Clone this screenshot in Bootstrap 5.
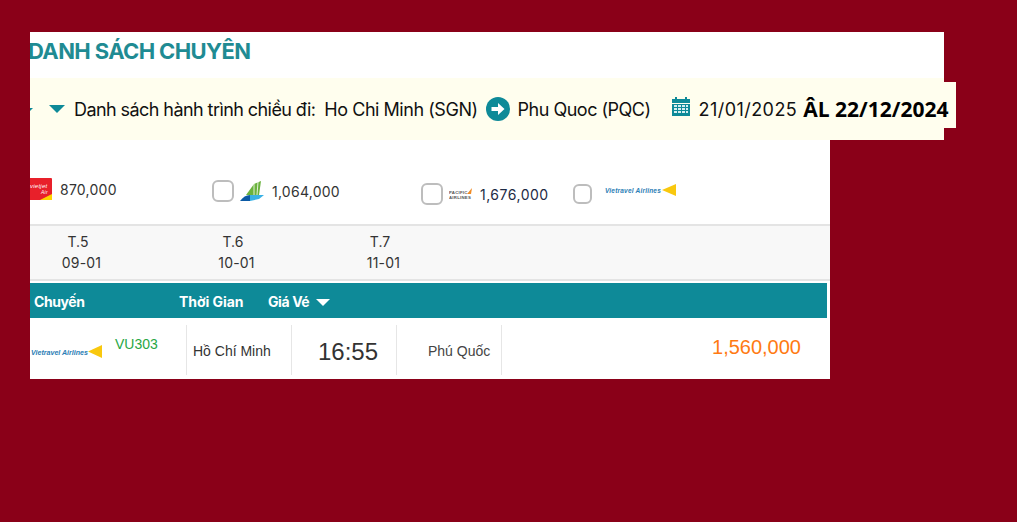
<!DOCTYPE html>
<html lang="vi">
<head>
<meta charset="utf-8">
<title>Danh sách chuyến</title>
<link rel="stylesheet" href="https://cdn.jsdelivr.net/npm/bootstrap@5.3.0/dist/css/bootstrap.min.css">
<style>
html,body{height:100%}
body{background:#8a0018;font-family:Inter,"Liberation Sans",sans-serif;overflow:hidden;color:#212529}
.shell{margin:32px 0 0 30px;width:914px}
.head-panel{background:#fff;height:46px;overflow:hidden}
.title-txt{color:#1f8b93;font-size:22px;font-weight:700;line-height:38px;margin:0 0 0 -2px;letter-spacing:-.62px;white-space:nowrap}
.route-bar{background:#fffeee;height:62px;font-size:18px;letter-spacing:-.57px;color:#111;white-space:nowrap}
.route-bar>*{flex:none}
.caret-stub{width:0;height:0;border-top:3px solid #0e8a98;border-right:3px solid transparent}
.caret-teal{width:0;height:0;border-left:8px solid transparent;border-right:8px solid transparent;border-top:8px solid #0e8a98;margin:0 9px 0 16px}
.to-place{margin-left:9px;letter-spacing:-.46px}
.end-place{letter-spacing:-.5px}
.cal-ico{margin:0 9px 6px 21px}
.date-txt{letter-spacing:.45px}
.lunar{font-family:"Open Sans","Liberation Sans",sans-serif;font-weight:700;font-size:21px;letter-spacing:0;background:#fffeee;color:#000;height:46px;padding:8px 8px 0 6px;line-height:38px;align-self:flex-start;margin-top:4px}
.list-panel{background:#fff;width:800px;height:239px;overflow:hidden}
.air-row{height:86px;border-bottom:2px solid #e4e4e4;position:relative;font-size:14px;letter-spacing:.25px;color:#333}
.air-item{position:absolute;display:flex;align-items:center}
.air-item>*{flex:none}
.price-pa{color:#1d2a44;letter-spacing:.5px}
.chk{width:22px;height:22px;border:2px solid #bdbdbd;border-radius:6px;background:#fff;display:block}
.chk-sm{width:19px;height:20px}
.vtr{margin-left:13px;margin-top:-8px}
.day-row{height:55px;background:#f8f8f8;border-bottom:2px solid #e4e4e4;position:relative;font-size:14px;color:#333;text-align:center;line-height:21px}
.day-cell{position:absolute;top:5px;width:80px}
.day-date{display:block;padding-left:7px;letter-spacing:.2px}
.grid-head{background:#0e8a98;color:#fff;width:797px;height:35px;margin-top:2px;font-size:14px;font-weight:700;letter-spacing:-.4px;line-height:37px;position:relative}
.grid-head span{position:absolute;top:0;white-space:nowrap}
.caret-white{position:absolute;left:286px;top:16px;width:0;height:0;border-left:7px solid transparent;border-right:7px solid transparent;border-top:7px solid #fff}
.flight-row{height:61px;position:relative;font-family:"Liberation Sans",sans-serif;overflow:hidden}
.cell-txt{position:absolute;white-space:nowrap}
.vline{position:absolute;width:1px;background:#e6e6e6;top:7px;bottom:4px}
</style>
</head>
<body>
<div class="shell">
  <div class="head-panel"><h4 class="title-txt">DANH SÁCH CHUYÊN</h4></div>
  <div class="route-bar d-flex align-items-center">
    <span class="caret-stub"></span>
    <span class="caret-teal"></span>
    <span>Danh sách hành trình chiều đi:</span>
    <span class="to-place">Ho Chi Minh (SGN)</span>
    <svg class="mx-2" width="24" height="24" viewBox="0 0 24 24" aria-hidden="true"><circle cx="12" cy="12" r="12" fill="#0e8a98"/><path d="M5.500 10H12V6l6.500 6-6.500 6v-4H5.500z" fill="#fff"/></svg>
    <span class="end-place">Phu Quoc (PQC)</span>
    <svg class="cal-ico" width="18" height="19" viewBox="0 0 18 19" aria-hidden="true"><path fill="#0e8a98" d="M0 2h3V0h2v2h8V0h2v2h3v17H0z"/><path fill="#fffeee" d="M0 6h18v1H0z"/><g fill="#d5eef1"><rect x="2" y="8" width="3" height="2"/><rect x="6" y="8" width="3" height="2"/><rect x="10" y="8" width="3" height="2"/><rect x="14" y="8" width="2" height="2"/><rect x="2" y="11" width="3" height="2"/><rect x="6" y="11" width="3" height="2"/><rect x="10" y="11" width="3" height="2"/><rect x="14" y="11" width="2" height="2"/><rect x="2" y="14" width="3" height="2"/><rect x="6" y="14" width="3" height="2"/><rect x="10" y="14" width="3" height="2"/><rect x="14" y="14" width="2" height="2"/></g></svg>
    <span class="date-txt">21/01/2025</span>
    <span class="lunar">ÂL 22/12/2024</span>
  </div>
  <div class="list-panel">
    <div class="air-row">
      <div class="air-item" style="left:0;top:38px">
        <svg width="22" height="23" viewBox="0 0 22 23" aria-hidden="true"><path d="M0 0h21a1 1 0 0 1 1 1v21H0z" fill="#e8202a"/><path d="M22 16v6H10z" fill="#ffd400"/><text x="0" y="10" font-size="6" font-style="italic" fill="#fff" font-family="Liberation Sans">vietjet</text><text x="11" y="16" font-size="5" font-style="italic" fill="#fff" font-family="Liberation Sans">Air</text></svg>
        <span class="ms-2">870,000</span>
      </div>
      <div class="air-item" style="left:182px;top:40px">
        <span class="chk"></span>
        <svg style="margin-left:6px" width="24" height="20" viewBox="0 0 24 20" aria-hidden="true"><path d="M6 14L14 3l7-3-2 14z" fill="#6bb33e"/><path d="M14 3v11M18 1l-1 13" stroke="#fff" stroke-width=".8"/><path d="M0 20c3-4 6-6 10-6v6z" fill="#0b5aa5"/><path d="M10 14h14l-5 4-9 2z" fill="#39b1e6"/></svg>
        <span class="ms-2">1,064,000</span>
      </div>
      <div class="air-item" style="left:391px;top:43px">
        <span class="chk"></span>
        <svg style="margin-left:6px;margin-right:7px" width="24" height="14" viewBox="0 0 24 14" aria-hidden="true"><text x="0" y="7" font-size="4.300" font-weight="700" fill="#555" font-family="Liberation Sans">PACIFIC</text><text x="0" y="12" font-size="4.300" font-weight="700" fill="#555" font-family="Liberation Sans">AIRLINES</text><path d="M18 7l5-6-1 6z" fill="#f08a24"/></svg>
        <span class="price-pa">1,676,000</span>
      </div>
      <div class="air-item" style="left:543px;top:44px">
        <span class="chk chk-sm"></span>
        <svg class="vtr" width="71" height="12" viewBox="0 0 71 12" aria-hidden="true"><text x="0" y="9" font-size="8" font-style="italic" font-weight="700" fill="#2a7db5" font-family="Liberation Sans" textLength="56" lengthAdjust="spacingAndGlyphs">Vietravel Airlines</text><path d="M57 6L71 0v12z" fill="#f9c80e"/></svg>
      </div>
    </div>
    <div class="day-row">
      <div class="day-cell" style="left:8px">T.5<span class="day-date">09-01</span></div>
      <div class="day-cell" style="left:163px">T.6<span class="day-date">10-01</span></div>
      <div class="day-cell" style="left:310px">T.7<span class="day-date">11-01</span></div>
    </div>
    <div class="grid-head">
      <span style="left:4px">Chuyến</span>
      <span style="left:149px;letter-spacing:-.05px">Thời Gian</span>
      <span style="left:238px">Giá Vé</span>
      <i class="caret-white"></i>
    </div>
    <div class="flight-row">
      <svg class="cell-txt" style="left:1px;top:26px" width="71" height="14" viewBox="0 0 71 14" aria-hidden="true"><text x="0" y="11" font-size="8" font-style="italic" font-weight="700" fill="#2a7db5" font-family="Liberation Sans" textLength="57" lengthAdjust="spacingAndGlyphs">Vietravel Airlines</text><path d="M57 7.500L71 1v13z" fill="#f9c80e"/></svg>
      <span class="cell-txt" style="left:85px;top:16px;font-size:14px;color:#28a745">VU303</span>
      <i class="vline" style="left:156px"></i>
      <span class="cell-txt" style="left:163px;top:23px;font-size:14px;color:#333">Hồ Chí Minh</span>
      <i class="vline" style="left:261px"></i>
      <span class="cell-txt" style="left:288px;top:16px;font-size:24px;color:#333">16:55</span>
      <i class="vline" style="left:366px"></i>
      <span class="cell-txt" style="left:398px;top:23px;font-size:14px;color:#444">Phú Quốc</span>
      <i class="vline" style="left:471px"></i>
      <span class="cell-txt" style="right:29px;top:14px;font-size:20px;color:#ff7a12">1,560,000</span>
    </div>
  </div>
</div>
<script src="https://cdn.jsdelivr.net/npm/bootstrap@5.3.0/dist/js/bootstrap.bundle.min.js"></script>
</body>
</html>
